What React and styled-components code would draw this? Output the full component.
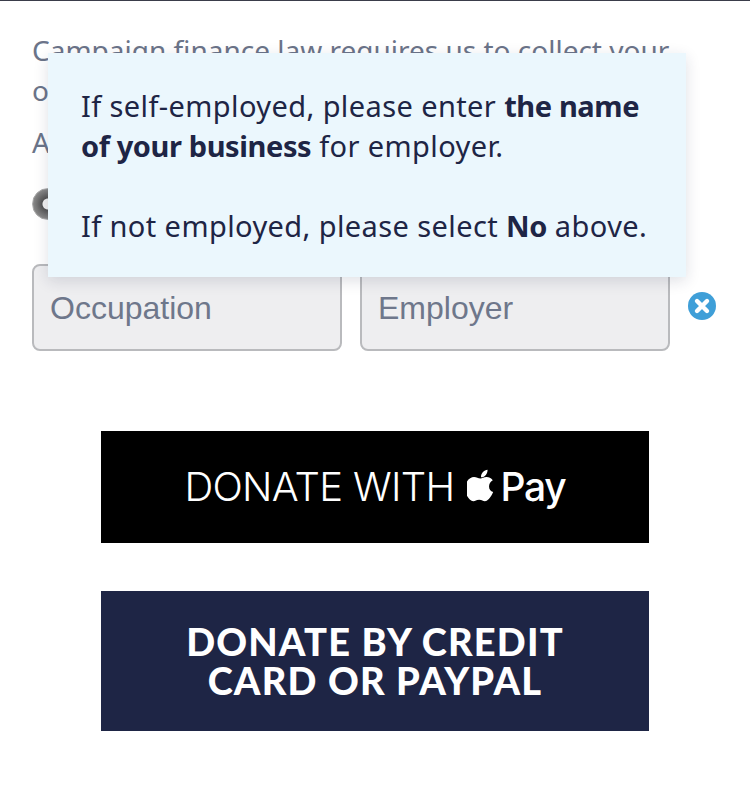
import React from "react";
import styled, { createGlobalStyle } from "styled-components";

const GlobalStyle = createGlobalStyle`
  html, body {
    margin: 0;
    padding: 0;
    background: #fff;
  }
  * {
    box-sizing: border-box;
  }
`;

const Page = styled.div`
  position: relative;
  width: 750px;
  height: 787px;
  overflow: hidden;
  border-top: 1px solid #3a3d4a;
  font-family: "Noto Sans", "Lato", sans-serif;
`;

const Form = styled.section`
  padding: 29px 32px 0;
  color: #6b7489;
  font-size: 28px;
`;

const Intro = styled.p`
  margin: 0;
  line-height: 40px;
  height: 80px;
  white-space: nowrap;
`;

const Question = styled.p`
  margin: 16px 0 0;
  line-height: 32px;
`;

const RadioRow = styled.div`
  margin-top: 30px;
  height: 32px;
`;

const Radio = styled.span`
  display: block;
  width: 32px;
  height: 32px;
  border-radius: 50%;
  border: 1px solid #a9a9a9;
  background: radial-gradient(circle, #f2f2f2 0 5px, #555 6px, #8a8a8a 15px);
`;

const Fields = styled.div`
  display: flex;
  align-items: center;
  gap: 18px;
  margin-top: 44px;
`;

const Field = styled.div`
  width: ${(p) => p.$width}px;
  height: 87px;
  padding: 2px 0 0 16px;
  display: flex;
  align-items: center;
  background: #eeeef0;
  border: 2px solid #b9babd;
  border-radius: 8px;
  font-family: "Liberation Sans", Arial, sans-serif;
  font-size: 32px;
  color: #6e778b;
`;

const ClearIcon = styled.svg`
  width: 28px;
  height: 28px;
  margin-bottom: 3px;
`;

const Buttons = styled.div`
  display: flex;
  flex-direction: column;
  align-items: center;
  gap: 48px;
  margin-top: 80px;
`;

const ApplePayButton = styled.div`
  width: 548px;
  height: 112px;
  padding-bottom: 1px;
  background: #000;
  color: #fff;
  display: flex;
  align-items: center;
  justify-content: center;
  font-family: "Inter", "Liberation Sans", sans-serif;
  font-size: 40px;
  font-weight: 300;
  letter-spacing: -0.7px;
`;

const PayMark = styled.span`
  display: inline-flex;
  align-items: center;
  margin-left: 13px;
  font-weight: 500;
  font-size: 39px;
  letter-spacing: -1.2px;
`;

const AppleLogo = styled.svg`
  width: 28px;
  height: 34px;
  margin-right: 5px;
  margin-top: -3px;
`;

const CardButton = styled.div`
  width: 548px;
  height: 140px;
  background: #1e2545;
  color: #fff;
  display: flex;
  align-items: center;
  justify-content: center;
  text-align: center;
  font-family: "Lato", sans-serif;
  font-size: 38px;
  line-height: 39px;
  font-weight: 900;
  letter-spacing: 1.2px;
`;

const Tooltip = styled.div`
  position: absolute;
  left: 48px;
  top: 52px;
  width: 638px;
  height: 224px;
  padding: 33px 33px 0;
  background: #ebf7fd;
  color: #1e2545;
  font-size: 29px;
  line-height: 40px;
  letter-spacing: 0.4px;
  box-shadow: 0 4px 14px rgba(30, 37, 69, 0.14);
  p {
    margin: 0 0 40px;
    white-space: nowrap;
  }
  strong {
    letter-spacing: -0.4px;
  }
`;

export default function App() {
  return (
    <>
      <GlobalStyle />
      <Page>
        <Form>
          <Intro>
            Campaign finance law requires us to collect your
            <br />
            occupation and employer.
          </Intro>
          <Question>Are you employed?</Question>
          <RadioRow>
            <Radio />
          </RadioRow>
          <Fields>
            <Field $width={310}>Occupation</Field>
            <Field $width={310}>Employer</Field>
            <ClearIcon viewBox="0 0 28 28">
              <circle cx="14" cy="14" r="14" fill="#3f9fd8" />
              <path d="M9 9l10 10M19 9L9 19" stroke="#fff" strokeWidth="4.4" strokeLinecap="round" />
            </ClearIcon>
          </Fields>
          <Buttons>
            <ApplePayButton>
              DONATE WITH
              <PayMark>
                <AppleLogo viewBox="0 0 24 28">
                  <path
                    fill="#fff"
                    d="M17.6 1c.1 1.7-.5 3.2-1.5 4.4-1 1.2-2.5 2.1-4.1 2-.2-1.6.6-3.3 1.5-4.3C14.6 2 16.300 1.100 17.600 1zM22.400 20c-.7 1.600-1 2.300-1.900 3.700-1.300 1.900-3 4.200-5.100 4.200-1.900 0-2.400-1.200-5-1.200s-3.100 1.200-5 1.200c-2.100 0-3.700-2.100-5-4C-1.800 20.600-2.100 14.200 0 10.900c1.500-2.300 3.800-3.700 6-3.700 2.200 0 3.600 1.200 5.400 1.200 1.800 0 2.800-1.200 5.400-1.200 1.900 0 3.900 1 5.300 2.800-4.700 2.600-3.900 9.300.3 10z"
                  />
                </AppleLogo>
                Pay
              </PayMark>
            </ApplePayButton>
            <CardButton>
              DONATE BY CREDIT
              <br />
              CARD OR PAYPAL
            </CardButton>
          </Buttons>
        </Form>
        <Tooltip>
          <p>
            If self-employed, please enter <strong>the name</strong>
            <br />
            <strong>of your business</strong> for employer.
          </p>
          <p>
            If not employed, please select <strong>No</strong> above.
          </p>
        </Tooltip>
      </Page>
    </>
  );
}
